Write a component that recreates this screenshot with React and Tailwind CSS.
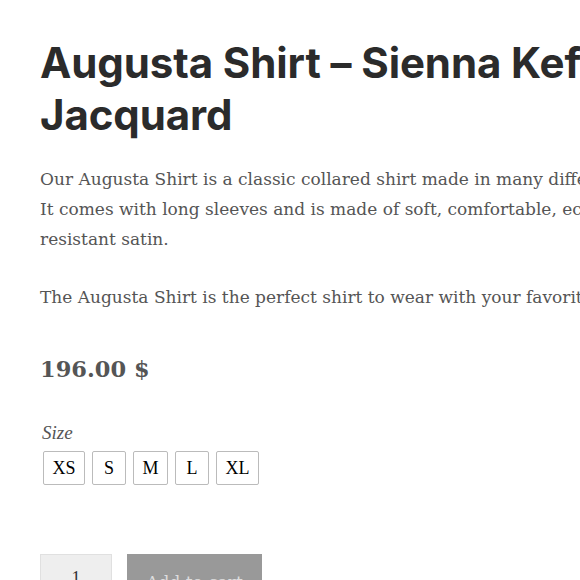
export default function App() {
    const sizes = ['XS', 'S', 'M', 'L', 'XL'];

    return (
        <div className="w-[580px] h-[580px] overflow-hidden bg-white">
            <div className="w-[760px] pl-10 pt-[37px]">
                <h1 className="text-[42px] leading-[52px] font-bold text-[#2b2b2b] font-['Inter',sans-serif] tracking-[-0.1px]">
                    Augusta Shirt – Sienna Keffiyeh<br />Jacquard
                </h1>

                <div className="mt-[23px] text-[17px] leading-[30px] text-[#555] font-['DejaVu_Serif',serif]">
                    <p>
                        Our Augusta Shirt is a classic collared shirt made in many different colors.<br />
                        It comes with long sleeves and is made of soft, comfortable, eco-friendly, wrinkle-<br />
                        resistant satin.
                    </p>
                    <p className="mt-[28px]">The Augusta Shirt is the perfect shirt to wear with your favorite jeans or trousers.</p>
                </div>

                <p className="mt-[41px] text-[22.5px] font-bold text-[#555] font-['DejaVu_Serif',serif]">196.00 $</p>

                <div className="mt-[32px] font-['Liberation_Serif',serif]">
                    <p className="text-[19px] italic text-[#555] pl-[2px]">Size</p>
                    <div className="mt-[4px] flex gap-[7px] pl-[3px]">
                        {sizes.map(size => (
                            <button key={size} className="h-[34px] min-w-[34px] px-[8.5px] border border-[#bbb] rounded-[2px] text-[18px] text-black bg-white">
                                {size}
                            </button>
                        ))}
                    </div>
                </div>

                <div className="mt-[69px] flex gap-[15px]">
                    <div className="w-[72px] h-[48px] bg-[#eee] border border-[#e0e0e0] flex items-center justify-center text-[18px] text-[#333] font-['Liberation_Serif',serif]">1</div>
                    <button className="w-[135px] h-[48px] pt-[8px] bg-[#999] text-[#ddd] text-[17px] font-['DejaVu_Serif',serif]">Add to cart</button>
                </div>
            </div>
        </div>
    );
}
